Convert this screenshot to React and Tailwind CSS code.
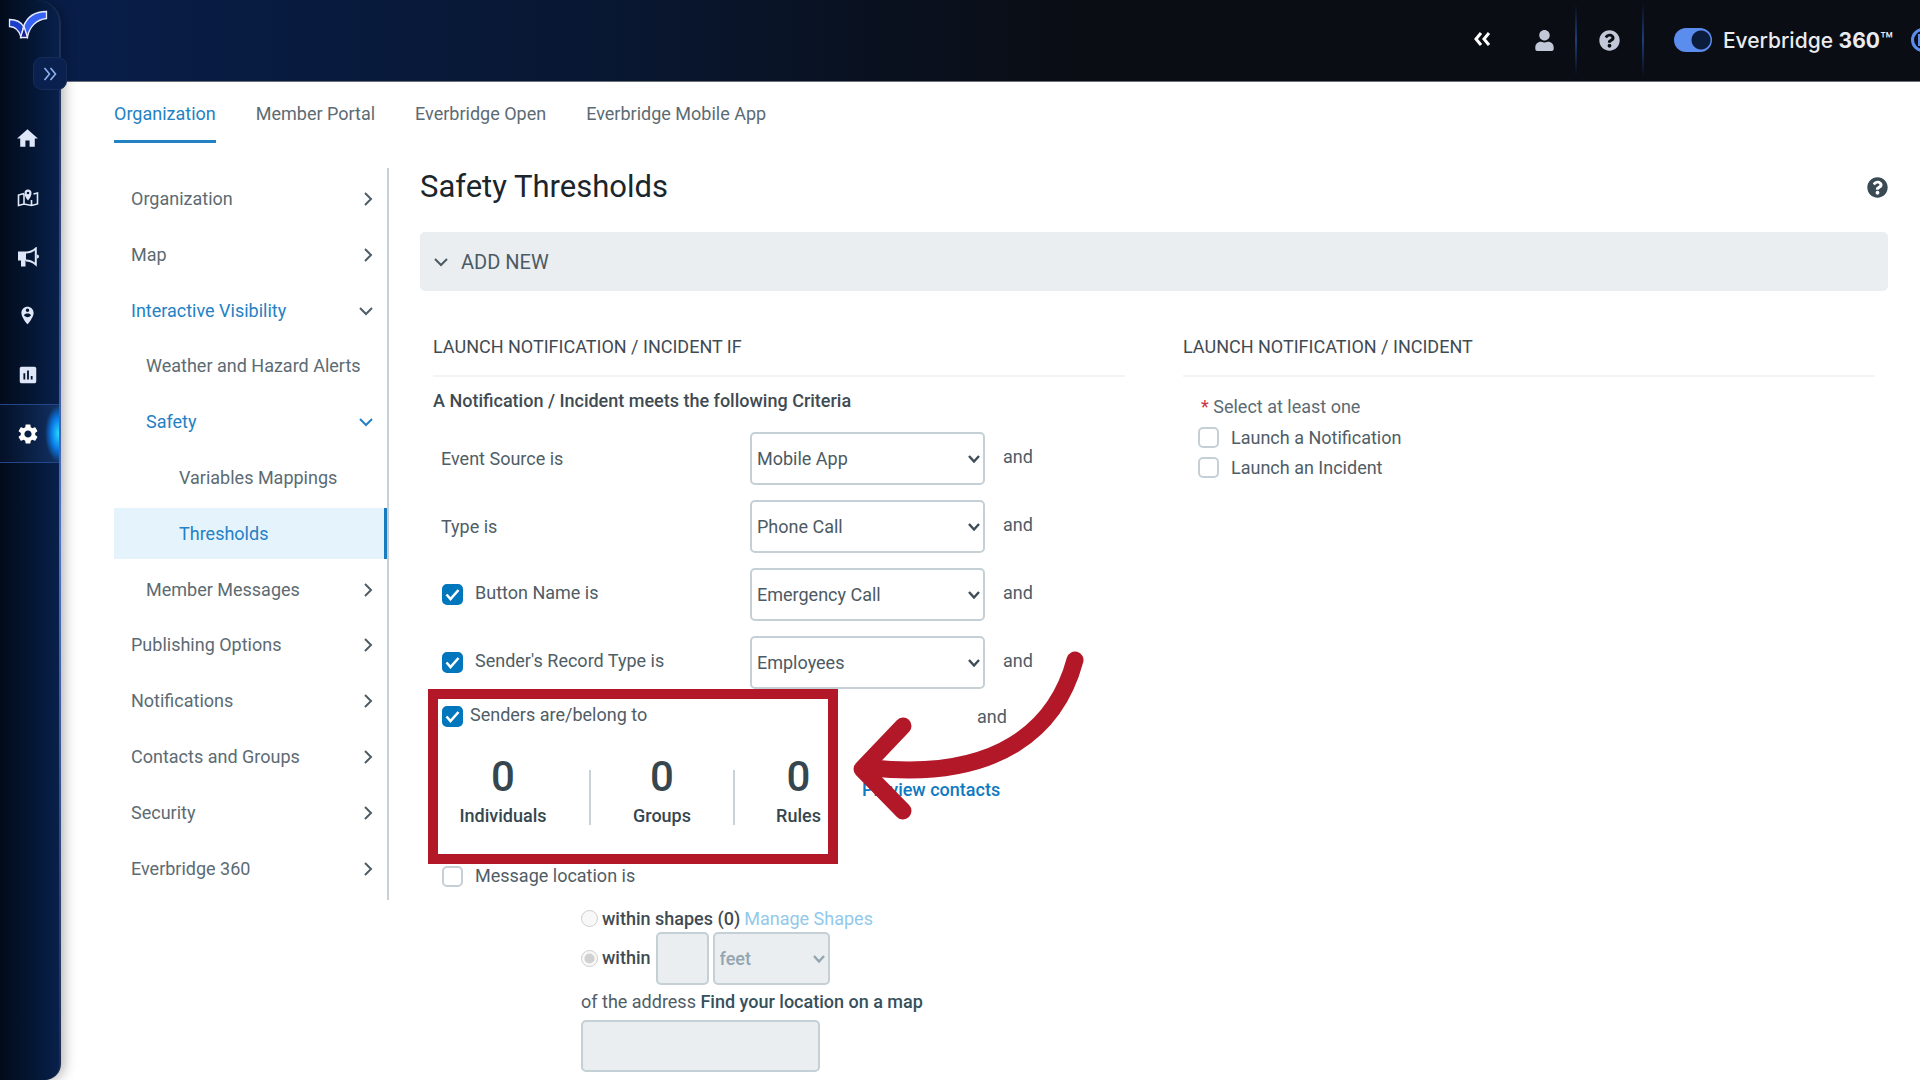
import { useState } from "react";
import { FaUser, FaQuestionCircle } from "react-icons/fa";
import { MdHome, MdInsertChart, MdSettings, MdPersonPinCircle } from "react-icons/md";

const TABS = ["Organization", "Member Portal", "Everbridge Open", "Everbridge Mobile App"];

const CRITERIA = [
  { id: "source", label: "Event Source is", options: ["Mobile App", "Desktop"] },
  { id: "type", label: "Type is", options: ["Phone Call", "SOS"] },
  { id: "button", label: "Button Name is", options: ["Emergency Call", "Check In"], optional: true },
  { id: "record", label: "Sender's Record Type is", options: ["Employees", "Contractors"], optional: true },
];

const COUNTS = [
  { label: "Individuals", value: 0 },
  { label: "Groups", value: 0 },
  { label: "Rules", value: 0 },
];

function Chevron({ dir = "down", className = "" }) {
  return (
    <svg viewBox="0 0 16 16" fill="none" stroke="currentColor" strokeWidth="2" className={`size-4 shrink-0 ${className}`}>
      <path d={dir === "down" ? "M2 5l6 6 6-6" : "M5 2l6 6-6 6"} />
    </svg>
  );
}

function Logo() {
  return (
    <svg viewBox="0 0 40 30" className="h-[30px] w-10" stroke="#e8ecff" strokeWidth="1.3" strokeLinejoin="miter">
      <path d="M1.5 10.5C8 10.5 13 13 15.500 17.500L13 28C11 21.500 7 17.500 1.500 17.500z" fill="#1c3fc9" />
      <path d="M38.500 2.500V9.500C29 10.500 21.500 17 19.500 28L15.500 17.500C19 8 27 2.500 38.500 2.500z" fill="#3763f4" />
      <path d="M16 17.500L12.500 28.500h7z" fill="#1a1a8c" />
    </svg>
  );
}

function MapIcon() {
  return (
    <svg viewBox="0 0 22 20" className="h-5 w-[22px]" fill="none" stroke="currentColor" strokeWidth="1.6">
      <path d="M7 5.500L1.500 7v10.500L7 16l7.500 1.500L20.500 16V5l-4 1M7 6v10M14.500 12v5.500" />
      <path d="M11 12.500C8.500 9.500 7.500 7.500 7.500 5a3.500 3.500 0 017 0c0 2.500-1 4.500-3.500 7.500z" fill="currentColor" stroke="none" />
      <circle cx="11" cy="5" r="1.300" fill="#06173a" stroke="none" />
    </svg>
  );
}

function Megaphone() {
  return (
    <svg viewBox="0 0 22 20" className="h-5 w-[22px]" fill="currentColor">
      <path d="M1 4.500H9v9H8.500V19.500H4V13.500H1z" />
      <path d="M9 5.500c4 0 7-1.500 9.800-4v16c-2.800-2.500-5.800-4-9.800-4" fill="none" stroke="currentColor" strokeWidth="2" />
      <path d="M20 7.500a2 2 0 010 4z" />
    </svg>
  );
}

const RAIL = [
  { name: "Home", icon: <MdHome className="size-[25px]" /> },
  { name: "Map", icon: <MapIcon /> },
  { name: "Notifications", icon: <Megaphone /> },
  { name: "Locations", icon: <MdPersonPinCircle className="size-[21px]" /> },
  { name: "Reports", icon: <MdInsertChart className="size-[22px]" /> },
  { name: "Settings", icon: <MdSettings className="size-6" />, active: true },
];

function Rail() {
  return (
    <aside className="relative z-10 flex w-[61px] shrink-0 rounded-tr-[24px] rounded-br-[16px] bg-linear-to-b from-[#1a2a4a] via-[#4d74cc] to-[#1a2a4a] pr-[2px] shadow-[2px_0_14px_rgba(0,0,0,0.35)]">
      <div className="flex w-full flex-col rounded-tr-[23px] rounded-br-[15px] bg-linear-to-r from-[#020b1a] to-[#08204b]">
        <a href="#home" aria-label="Everbridge" className="ml-2 mt-[9px] w-10">
          <Logo />
        </a>
        <button
          aria-label="Expand menu"
          className="ml-[33px] mt-[18px] flex h-[33px] w-[34px] shrink-0 items-center justify-center rounded-[9px] border border-[#152c58] bg-[#0a2150] text-[#8fb0f0]"
        >
          <svg viewBox="0 0 14 14" fill="none" stroke="currentColor" strokeWidth="1.6" className="size-[14px]">
            <path d="M1.500 1l5 6-5 6M7.500 1l5 6-5 6" />
          </svg>
        </button>
        <nav className="mt-[19px] flex flex-col">
          {RAIL.map((item) => (
            <button
              key={item.name}
              aria-label={item.name}
              className={`relative flex h-[59px] items-center justify-center overflow-hidden pr-1 ${
                item.active
                  ? "border-y border-[#24468a] bg-linear-to-r from-[#041027] to-[#123163] text-white"
                  : "text-[#dfe6f8]"
              }`}
            >
              {item.icon}
              {item.active && (
                <span className="absolute -right-[14px] top-0 h-full w-7 bg-[radial-gradient(closest-side,#25e0ff,#0a7be8_55%,transparent)]" />
              )}
            </button>
          ))}
        </nav>
      </div>
    </aside>
  );
}

function Divider() {
  return <span className="h-[72px] w-[2px] bg-linear-to-b from-transparent via-[#1d3d7c] to-transparent" />;
}

function TopBar() {
  return (
    <header className="flex h-[82px] shrink-0 items-center justify-end overflow-hidden border-b border-[#6b6f78] bg-linear-to-r from-[#081e4a] via-[#081732] via-30% to-[#0a0d14] to-55% pb-px text-[#c3c8d8]">
      <button aria-label="Collapse" className="mr-[43px] pb-[2px] text-white">
        <svg viewBox="0 0 18 14" fill="none" stroke="currentColor" strokeWidth="3" className="h-[14px] w-[18px]">
          <path d="M8 1L3 7l5 6M16 1l-5 6 5 6" />
        </svg>
      </button>
      <button aria-label="Account" className="mr-5">
        <FaUser className="size-[21px]" />
      </button>
      <Divider />
      <button aria-label="Help" className="mx-[22px] mt-px">
        <FaQuestionCircle className="size-[21px]" />
      </button>
      <Divider />
      <label className="ml-[30px] flex items-center gap-[11px] font-[Inter,sans-serif] text-[21px] font-medium text-[#e9ebf0]">
        <input
          type="checkbox"
          role="switch"
          defaultChecked
          className="h-6 w-[38px] appearance-none rounded-full bg-[#5b8def] bg-[radial-gradient(circle_at_27px_12px,#0c1c3c_9px,transparent_10px)]"
        />
        <span>
          Everbridge <b className="font-bold">360</b>™
        </span>
      </label>
      <button aria-label="Pin" className="-mr-[15px] ml-[18px] flex size-6 items-center rounded-full border-3 border-[#5b8def] pl-1">
        <span className="h-3 w-2 border-2 border-[#5b8def]" />
      </button>
    </header>
  );
}

function NavItem({ label, pad = "pl-[17px]", dir = "right", blue, active }) {
  return (
    <a
      href={`#${label}`}
      className={`flex h-[51px] items-center justify-between pr-[11px] ${pad} ${
        active ? "border-r-3 border-[#1a7dc0] bg-[#e5f3fd]" : ""
      } ${blue || active ? "text-[#2481c4]" : "text-[#5c6b73]"}`}
    >
      {label}
      {dir !== "none" && (
        <Chevron dir={dir} className={dir === "right" ? "text-[#4e5d66]" : blue === "all" ? "mr-[2px] text-[#2481c4]" : "mr-[2px] text-[#4e5d66]"} />
      )}
    </a>
  );
}

function SideNav() {
  return (
    <nav className="flex w-[275px] shrink-0 flex-col gap-[5px] self-start border-r-2 border-[#c9d1d6] pb-[6px] pt-[5px]">
      <NavItem label="Organization" />
      <NavItem label="Map" />
      <NavItem label="Interactive Visibility" dir="down" blue />
      <div className="-mt-px flex flex-col gap-[5px]">
        <NavItem label="Weather and Hazard Alerts" pad="pl-8" dir="none" />
        <NavItem label="Safety" pad="pl-8" dir="down" blue="all" />
        <div className="flex flex-col gap-[5px]">
          <NavItem label="Variables Mappings" pad="pl-[65px]" dir="none" />
          <NavItem label="Thresholds" pad="pl-[65px]" dir="none" active />
        </div>
        <NavItem label="Member Messages" pad="pl-8" />
      </div>
      <div className="-mt-px flex flex-col gap-[5px]">
        <NavItem label="Publishing Options" />
        <NavItem label="Notifications" />
        <NavItem label="Contacts and Groups" />
        <NavItem label="Security" />
        <NavItem label="Everbridge 360" />
      </div>
    </nav>
  );
}

function Checkbox({ id, ...props }) {
  return (
    <span className="relative flex size-[21px] shrink-0">
      <input
        id={id}
        type="checkbox"
        className="peer size-full appearance-none rounded-[5px] border-2 border-[#c5d0d6] bg-white checked:border-[#0076bd] checked:bg-[#0076bd]"
        {...props}
      />
      <svg viewBox="0 0 21 21" fill="none" stroke="#fff" strokeWidth="2.600" className="pointer-events-none absolute inset-0 hidden peer-checked:block">
        <path d="M4.500 10.500l4 4.500 8-9" />
      </svg>
    </span>
  );
}

function Select({ options, className, ...props }) {
  return (
    <span className={`relative flex shrink-0 ${className}`}>
      <select
        className="h-[53px] w-full appearance-none rounded-[5px] border-2 border-[#c5d0d6] bg-white pl-[5px] text-[#4c5a63] disabled:bg-[#eaeef1] disabled:text-[#94a5af] disabled:opacity-100"
        {...props}
      >
        {options.map((o) => (
          <option key={o}>{o}</option>
        ))}
      </select>
      <svg
        viewBox="0 0 12 8"
        fill="none"
        stroke="currentColor"
        strokeWidth="2.400"
        className={`pointer-events-none absolute right-[5px] top-[23px] h-2 w-3 ${props.disabled ? "text-[#94a5af]" : "text-[#3d4c55]"}`}
      >
        <path d="M1 1l5 5.500L11 1" />
      </svg>
    </span>
  );
}

function SendersSection() {
  return (
    <div className="relative h-[173px]">
      <div className="flex items-center pl-[9px] pt-3">
        <Checkbox id="senders" defaultChecked />
        <label htmlFor="senders" className="w-[514px] pb-1 pl-[7px]">Senders are/belong to</label>
        <span>and</span>
      </div>
      <div className="mt-[25px] flex items-start text-[#36464f]">
        {COUNTS.map((c, i) => (
          <div key={c.label} className="flex items-start">
            {i > 0 && <span className="mt-[13px] h-[55px] w-[2px] bg-[#c9d3d8]" />}
            <div className={`flex flex-col items-center font-medium ${i === 0 ? "w-[156px] pr-4" : i === 1 ? "w-[142px]" : "w-[127px]"}`}>
              <span className="text-[42px] leading-10">{c.value}</span>
              <span className="mt-[7px] leading-6">{c.label}</span>
            </div>
          </div>
        ))}
        <a href="#preview" className="mt-[19px] font-medium text-[#0f79c1]">Preview contacts</a>
      </div>

      {/* callout */}
      <div className="pointer-events-none absolute -left-[5px] top-0 h-[175px] w-[410px] border-10 border-[#b31828]" />
      <svg
        viewBox="0 0 240 180"
        fill="none"
        stroke="#b31828"
        strokeWidth="17"
        strokeLinecap="round"
        strokeLinejoin="round"
        className="pointer-events-none absolute -top-[40px] left-[417px] h-[180px] w-[240px]"
      >
        <path d="M225 11C207 78 150 132 22 119" />
        <path d="M53 77L12 120l41 42" />
      </svg>
    </div>
  );
}

function CriteriaColumn() {
  return (
    <section className="min-w-0 flex-1">
      <h2 className="border-b-2 border-[#f2f4f5] pb-[15px] text-[#3f4b53]">LAUNCH NOTIFICATION / INCIDENT IF</h2>
      <p className="mt-[10px] font-medium text-[#3f4b53]">A Notification / Incident meets the following Criteria</p>
      <div className="mt-[18px] flex flex-col gap-[15px]">
        {CRITERIA.map((row) => (
          <div key={row.id} className="flex h-[53px] items-center pl-2">
            <div className={`flex w-[309px] items-center gap-3 ${row.optional ? "pl-px" : ""}`}>
              {row.optional && <Checkbox aria-label={`Use ${row.label}`} defaultChecked />}
              <label htmlFor={row.id} className={row.optional ? "pb-1" : ""}>{row.label}</label>
            </div>
            <Select id={row.id} options={row.options} className="w-[235px]" />
            <span className="pb-1 pl-[18px]">and</span>
          </div>
        ))}
      </div>
      <SendersSection />
      <div className="flex items-center gap-3 pl-[9px]">
        <Checkbox id="msgloc" />
        <label htmlFor="msgloc" className="pb-[2px]">Message location is</label>
      </div>
      <div className="pl-[148px] pt-[14px]">
        <div className="flex items-center gap-1 font-medium text-[#3f4b53]">
          <input id="shapes" type="radio" name="loc" disabled className="size-[17px]" />
          <label htmlFor="shapes">within shapes (0)</label>
          <a href="#shapes" className="font-normal text-[#92c9ea]">Manage Shapes</a>
        </div>
        <div className="flex items-center gap-1 font-medium text-[#3f4b53]">
          <input id="within" type="radio" name="loc" disabled defaultChecked className="size-[17px]" />
          <label htmlFor="within" className="pb-[2px] pr-px">within</label>
          <input aria-label="Distance" disabled className="h-[53px] w-[53px] rounded-[5px] border-2 border-[#c5d0d6] bg-[#eaeef1]" />
          <Select aria-label="Unit" options={["feet", "miles"]} disabled className="w-[117px]" />
        </div>
        <label htmlFor="address" className="mt-[3px] block">
          of the address <b className="font-medium text-[#36505c]">Find your location on a map</b>
        </label>
        <input id="address" disabled className="mt-[5px] block h-[52px] w-[239px] rounded-[5px] border-2 border-[#c5d0d6] bg-[#eaeef1]" />
      </div>
    </section>
  );
}

function LaunchColumn() {
  return (
    <section className="min-w-0 flex-1">
      <h2 className="border-b-2 border-[#f2f4f5] pb-[15px] text-[#3f4b53]">LAUNCH NOTIFICATION / INCIDENT</h2>
      <p className="mb-1 mt-4 pl-[18px] text-[#5c6b73]">
        <span className="text-[#cc3340]">*</span> Select at least one
      </p>
      <div className="flex flex-col gap-[3px]">
        {["Launch a Notification", "Launch an Incident"].map((label) => (
          <div key={label} className="flex items-center gap-3 pl-[15px]">
            <Checkbox id={label} />
            <label htmlFor={label}>{label}</label>
          </div>
        ))}
      </div>
    </section>
  );
}

export default function App() {
  const [tab, setTab] = useState("Organization");

  return (
    <div className="flex min-h-screen overflow-hidden bg-white font-[Roboto,sans-serif] text-lg leading-[27px] text-[#4f5d66]">
      <Rail />
      <div className="-ml-6 flex min-w-0 flex-1 flex-col">
        <TopBar />
        <main className="pb-2 pl-[77px] pr-8">
          <div className="flex gap-10" role="tablist">
            {TABS.map((t) => (
              <button
                key={t}
                role="tab"
                aria-selected={t === tab}
                onClick={() => setTab(t)}
                className={`border-b-3 pb-[13px] pt-[18px] ${
                  t === tab ? "border-[#2481c4] text-[#2481c4]" : "border-transparent text-[#5c6b73]"
                }`}
              >
                {t}
              </button>
            ))}
          </div>
          <div className="mt-[25px] flex">
            <SideNav />
            <div className="ml-[31px] min-w-0 flex-1">
              <div className="flex items-center justify-between">
                <h1 className="text-[31px] leading-[38px] text-[#1b262c]">Safety Thresholds</h1>
                <button aria-label="Page help" className="text-[#3a4a54]">
                  <FaQuestionCircle className="size-[21px]" />
                </button>
              </div>
              <button className="mt-[26px] flex h-[59px] w-full items-center gap-3 rounded-[5px] bg-[#eaeef1] pl-[13px] text-xl text-[#4c5a63]">
                <Chevron />
                ADD NEW
              </button>
              <div className="mt-[42px] flex gap-[58px] px-[13px]">
                <CriteriaColumn />
                <LaunchColumn />
              </div>
            </div>
          </div>
        </main>
      </div>
    </div>
  );
}
